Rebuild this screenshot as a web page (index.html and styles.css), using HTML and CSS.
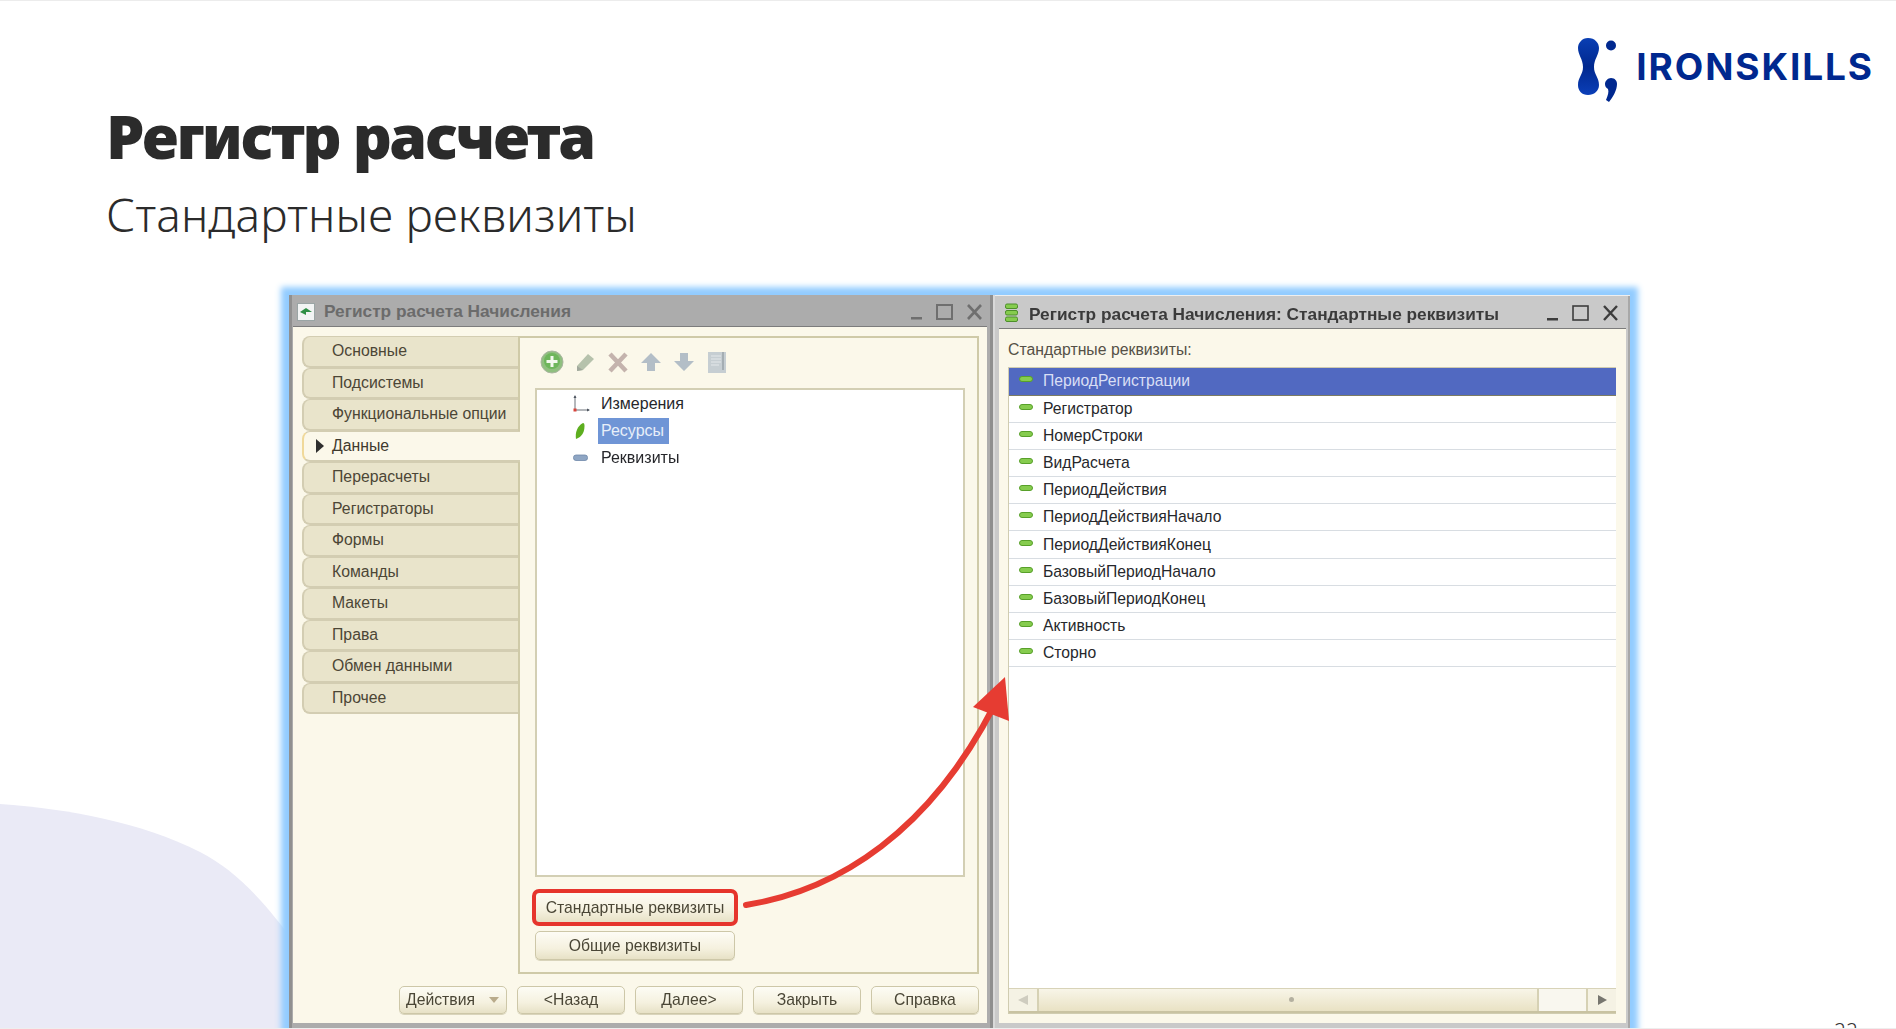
FILE: index.html
```html
<!DOCTYPE html>
<html lang="ru">
<head>
    <meta charset="UTF-8">
    <meta name="viewport" content="width=device-width, initial-scale=1.0">
    <title>Регистр расчета</title>
    <link rel="stylesheet" href="styles.css">
</head>
<body>
    <div class="slide">
        <svg class="blob" width="300" height="230" viewBox="0 0 300 230">
            <path d="M0 6 C70 11 140 24 200 54 C235 72 262 100 300 152 L300 230 L0 230 Z" fill="#eaeaf6"/>
        </svg>

        <header class="slide-head">
            <div class="titles">
                <h1>Регистр расчета</h1>
                <p class="subtitle">Стандартные реквизиты</p>
            </div>
            <div class="logo">
                <svg width="50" height="70" viewBox="0 0 50 70">
                    <defs>
                        <linearGradient id="logoFill" x1="0" y1="0" x2="0" y2="1">
                            <stop offset="0" stop-color="#0a3fb4"/>
                            <stop offset="0.5" stop-color="#00288f"/>
                            <stop offset="1" stop-color="#0b3fb8"/>
                        </linearGradient>
                    </defs>
                    <path d="M17 3 C24 3 28 8 28 13 C28 20 23 24 23 32 C23 40 28 42 28 50 C28 56 23 60 17 60 C11 60 7 56 7 50 C7 42 12 40 12 32 C12 24 7 20 7 13 C7 8 11 3 17 3 Z" fill="url(#logoFill)"/>
                    <circle cx="40" cy="10.5" r="5" fill="#00288f"/>
                    <path d="M40 43 C44 43 46 46 46 49 C46 55 42 62 38 67 L35 65 C37 60 38 57 37 54 C35 53 34 51 34 49 C34 46 37 43 40 43 Z" fill="#00288f"/>
                </svg>
                <span class="logo-text">IRONSKILLS</span>
            </div>
        </header>

        <div class="desktop">
            <!-- Окно регистра -->
            <section class="window window-main">
                <div class="titlebar">
                    <svg class="title-icon" width="18" height="18" viewBox="0 0 18 18">
                        <rect x="0.5" y="0.5" width="17" height="17" fill="#f2f4f4" stroke="#9aa5a5"/>
                        <path d="M3 9 L9 5 L15 9 L9 9 L9 12 Z" fill="#2f8f46"/>
                    </svg>
                    <span class="title-text">Регистр расчета Начисления</span>
                    <span class="win-controls">
                        <svg width="76" height="20" viewBox="0 0 76 20">
                            <rect x="1" y="15" width="11" height="2.5" fill="#6f6f6f"/>
                            <rect x="27" y="3" width="15" height="14" fill="none" stroke="#6f6f6f" stroke-width="2"/>
                            <path d="M58 3 L71 17 M71 3 L58 17" stroke="#6f6f6f" stroke-width="2.6"/>
                        </svg>
                    </span>
                </div>
                <div class="win-body">
                    <div class="editor">
                        <ul class="tabs">
                            <li>Основные</li>
                            <li>Подсистемы</li>
                            <li>Функциональные опции</li>
                            <li class="active">Данные</li>
                            <li>Перерасчеты</li>
                            <li>Регистраторы</li>
                            <li>Формы</li>
                            <li>Команды</li>
                            <li>Макеты</li>
                            <li>Права</li>
                            <li>Обмен данными</li>
                            <li>Прочее</li>
                        </ul>
                        <div class="panel">
                            <div class="toolbar">
                                <svg width="24" height="24" viewBox="0 0 24 24">
                                    <circle cx="12" cy="12" r="11" fill="#8fbf7f" stroke="#a9b5a0"/>
                                    <circle cx="12" cy="11" r="8" fill="#6eb65c"/>
                                    <path d="M12 6 V17 M6.5 11.5 H17.5" stroke="#f4f8ef" stroke-width="3"/>
                                </svg>
                                <svg width="24" height="24" viewBox="0 0 24 24">
                                    <path d="M4 16 L15 4 L21 9 L10 20 L4 21 Z" fill="#b6c2ac"/>
                                    <path d="M4 16 L10 20 L4 21 Z" fill="#a1a89c"/>
                                </svg>
                                <svg width="24" height="24" viewBox="0 0 24 24">
                                    <path d="M4 4 L20 21 M20 4 L4 21" stroke="#c4b3ad" stroke-width="4.5"/>
                                </svg>
                                <svg width="24" height="24" viewBox="0 0 24 24">
                                    <path d="M12 3 L22 13 H16 V21 H8 V13 H2 Z" fill="#b3bec7"/>
                                </svg>
                                <svg width="24" height="24" viewBox="0 0 24 24">
                                    <path d="M8 3 H16 V11 H22 L12 21 L2 11 H8 Z" fill="#b3bec7"/>
                                </svg>
                                <svg width="24" height="24" viewBox="0 0 24 24">
                                    <rect x="3" y="2" width="18" height="21" fill="#c6ced2"/>
                                    <path d="M6 6 H16 M6 9 H16 M6 12 H16 M6 15 H14" stroke="#e4e8e9" stroke-width="1.2"/>
                                    <path d="M18 2 V20" stroke="#a5aeb3" stroke-width="2"/>
                                </svg>
                            </div>
                            <div class="tree">
                                <div class="tree-row">
                                    <svg class="tree-icon" width="20" height="20" viewBox="0 0 20 20">
                                        <path d="M4 2 V16 H18" fill="none" stroke="#6a7078" stroke-width="1"/>
                                        <path d="M2.5 4 L4 1 L5.5 4 Z M16 14.5 L19 16 L16 17.5 Z" fill="#4e5560"/>
                                        <rect x="2.5" y="14.5" width="3" height="3" fill="#d8443c"/>
                                    </svg>
                                    <span class="tree-label">Измерения</span>
                                </div>
                                <div class="tree-row">
                                    <svg class="tree-icon" width="20" height="20" viewBox="0 0 20 20">
                                        <path d="M5 18 C4 12 6 5 12 2 C13 2 13.5 3 13.5 5 C13.5 11 11 16 5 18 Z" fill="#5dae1f"/>
                                    </svg>
                                    <span class="tree-label selected">Ресурсы</span>
                                </div>
                                <div class="tree-row">
                                    <svg class="tree-icon" width="20" height="20" viewBox="0 0 20 20">
                                        <rect x="2.5" y="7" width="14" height="5.5" rx="2.5" fill="#8fa6c4" stroke="#6f88aa" stroke-width="0.8"/>
                                    </svg>
                                    <span class="tree-label">Реквизиты</span>
                                </div>
                            </div>
                            <div class="panel-buttons">
                                <button class="btn btn-wide btn-marked">Стандартные реквизиты</button>
                                <button class="btn btn-wide">Общие реквизиты</button>
                            </div>
                        </div>
                    </div>
                    <div class="footer">
                        <button class="btn btn-foot btn-menu">Действия <span class="menu-caret"></span></button>
                        <button class="btn btn-foot">&lt;Назад</button>
                        <button class="btn btn-foot">Далее&gt;</button>
                        <button class="btn btn-foot">Закрыть</button>
                        <button class="btn btn-foot">Справка</button>
                    </div>
                </div>
            </section>

            <!-- Окно стандартных реквизитов -->
            <section class="window window-attrs">
                <div class="titlebar">
                    <svg class="title-icon" width="16" height="20" viewBox="0 0 16 20">
                        <rect x="1.5" y="1" width="12" height="4.5" rx="1.5" fill="#86cc4e" stroke="#4d8f2a"/>
                        <rect x="1.5" y="7.5" width="12" height="4.5" rx="1.5" fill="#86cc4e" stroke="#4d8f2a"/>
                        <rect x="1.5" y="14" width="12" height="4.5" rx="1.5" fill="#86cc4e" stroke="#4d8f2a"/>
                    </svg>
                    <span class="title-text">Регистр расчета Начисления: Стандартные реквизиты</span>
                    <span class="win-controls">
                        <svg width="76" height="20" viewBox="0 0 76 20">
                            <rect x="1" y="15" width="11" height="2.5" fill="#3d3d3d"/>
                            <rect x="27" y="3" width="15" height="14" fill="none" stroke="#3d3d3d" stroke-width="1.6"/>
                            <path d="M58 3 L71 17 M71 3 L58 17" stroke="#3d3d3d" stroke-width="2.4"/>
                        </svg>
                    </span>
                </div>
                <div class="win-body attrs-body">
                    <div class="attrs-label">Стандартные реквизиты:</div>
                    <div class="attrs-list">
                        <ul class="rows">
                            <li class="current"><i class="pill"></i>ПериодРегистрации</li>
                            <li><i class="pill"></i>Регистратор</li>
                            <li><i class="pill"></i>НомерСтроки</li>
                            <li><i class="pill"></i>ВидРасчета</li>
                            <li><i class="pill"></i>ПериодДействия</li>
                            <li><i class="pill"></i>ПериодДействияНачало</li>
                            <li><i class="pill"></i>ПериодДействияКонец</li>
                            <li><i class="pill"></i>БазовыйПериодНачало</li>
                            <li><i class="pill"></i>БазовыйПериодКонец</li>
                            <li><i class="pill"></i>Активность</li>
                            <li><i class="pill"></i>Сторно</li>
                        </ul>
                        <div class="scrollbar">
                            <div class="sb-btn"><span class="sb-left"></span></div>
                            <div class="sb-thumb"><i class="sb-grip"></i></div>
                            <div class="sb-track"></div>
                            <div class="sb-btn sb-btn-right"><span class="sb-right"></span></div>
                        </div>
                    </div>
                </div>
            </section>
        </div>

        <svg class="arrow" width="290" height="260" viewBox="730 670 290 260">
            <path d="M746 905 C840 890 930 830 994 706" fill="none" stroke="#e63c32" stroke-width="6" stroke-linecap="round"/>
            <path d="M1005 677 L1009 721 L973 707 Z" fill="#e63c32"/>
        </svg>

        <div class="page-num">22</div>
    </div>
</body>
</html>
```

FILE: styles.css
```css
* {
    box-sizing: border-box;
}
html, body {
    margin: 0;
    padding: 0;
    background: #fff;
}
body {
    width: 1896px;
    height: 1029px;
    overflow: hidden;
}
ul {
    list-style: none;
    margin: 0;
    padding: 0;
}
.slide {
    position: relative;
    width: 1896px;
    height: 1029px;
    overflow: hidden;
    background: #fff;
    border-top: 1px solid #ececec;
    border-bottom: 1px solid #eeeeee;
    font-family: "Liberation Sans", Arial, sans-serif;
}
.blob {
    position: absolute;
    left: 0;
    bottom: 0;
}
.slide-head {
    position: relative;
    display: flex;
    justify-content: space-between;
    padding: 0 22px 0 106px;
}
.titles {
    padding-top: 87px;
    color: #2b2b2b;
    font-family: "Noto Sans", sans-serif;
}
h1 {
    margin: 0;
    font-size: 61px;
    line-height: 95px;
    font-weight: 900;
    letter-spacing: -2.3px;
}
.subtitle {
    margin: 0;
    font-size: 46px;
    line-height: 62px;
    font-weight: 300;
    letter-spacing: 0.2px;
}
.logo {
    display: flex;
    align-items: flex-start;
    gap: 15px;
    padding-top: 34px;
}
.logo-text {
    margin-top: 7px;
    font-family: Inter, sans-serif;
    font-size: 37px;
    font-weight: 700;
    letter-spacing: 1.9px;
    line-height: 50px;
    color: #00288f;
}

/* окна */
.desktop {
    position: absolute;
    left: 289px;
    top: 294px;
    width: 1341px;
    height: 735px;
    display: flex;
    gap: 2px;
    background: #d9d9d9;
    box-shadow: 0 0 6px 8px #92ccff;
    filter: blur(0.5px);
}
.window {
    display: flex;
    flex-direction: column;
    height: 734px;
    background: #acacac;
}
.window-main {
    width: 704px;
    padding: 0 6px 6px 4px;
    background: #acacac;
    box-shadow: inset -3px 0 0 #8e8e8e, inset 3px 0 0 #909090;
}
.window-attrs {
    width: 635px;
    padding: 0 4px 6px 4px;
    background: #c9c9c9;
    box-shadow: inset 0 1px 0 #eeeeee, inset -2px 0 0 #a8a8a8;
}
.titlebar {
    flex: none;
    display: flex;
    align-items: center;
    height: 32px;
    gap: 9px;
    padding: 2px 1px 0 4px;
    font-size: 17.3px;
    font-weight: bold;
    white-space: nowrap;
}
.window-main .titlebar {
    color: #6b6b6b;
    border-bottom: 1px solid #7c7c7c;
}
.window-attrs .titlebar {
    height: 34px;
    color: #3b3b3b;
    border-bottom: 1px solid #7c7c7c;
    gap: 9px;
    padding: 3px 4px 0 5px;
}
.window-attrs .title-text {
    padding-top: 2px;
}
.win-controls {
    margin-left: auto;
    display: flex;
}
.win-body {
    flex: 1;
    min-height: 0;
    background: #fbf8ea;
    display: flex;
    flex-direction: column;
}
.editor {
    display: flex;
    height: 638px;
    margin: 9px 0 0 9px;
}
.tabs {
    flex: none;
    width: 216px;
    font-size: 15.8px;
    color: #4c4636;
}
.tabs li {
    height: 31.5px;
    line-height: 27px;
    padding-left: 28px;
    background: #e9e4cb;
    border: 2px solid #d3cdb2;
    border-right: none;
    border-top-left-radius: 8px;
    border-bottom-left-radius: 8px;
    border-top-width: 1px;
}
.tabs li.active {
    position: relative;
    background: #fbf8ea;
    border-left-color: #f0d99a;
    margin-right: -2px;
    z-index: 1;
    color: #3f3a2e;
}
.tabs li.active::before {
    content: "";
    position: absolute;
    left: 12px;
    top: 7px;
    border-left: 8px solid #2f2f2f;
    border-top: 7px solid transparent;
    border-bottom: 7px solid transparent;
}
.panel {
    flex: none;
    width: 461px;
    padding: 0 12px 12px 15px;
    border: 2px solid #cfcaa8;
    display: flex;
    flex-direction: column;
}
.toolbar {
    flex: none;
    display: flex;
    height: 50px;
    gap: 9px;
    padding: 12px 0 0 5px;
}
.tree {
    height: 490px;
    padding-top: 0;
    background: #fff;
    border: 2px solid #d3cfb4;
    font-size: 16px;
    color: #26272b;
}
.tree-row {
    display: flex;
    align-items: center;
    height: 27.4px;
    padding-left: 34px;
}
.tree-icon {
    margin-right: 7px;
}
.tree-label {
    padding: 0 5px 0 3px;
    height: 26px;
    line-height: 26px;
}
.tree-label.selected {
    background: #6f95d6;
    color: #e8eff9;
}
.panel-buttons {
    display: flex;
    flex-direction: column;
    gap: 8px;
    margin-top: 15px;
}
.btn {
    font-family: inherit;
    font-size: 15.75px;
    color: #4a4636;
    padding: 0;
    border: 1px solid #cdc7a8;
    border-radius: 5px;
    background: linear-gradient(#fdfcf5, #f5f1df 60%, #e7e1c6);
    box-shadow: 0 1px 0 #d9d4bb;
}
.btn-wide {
    width: 200px;
    height: 29px;
}
.btn-marked {
    height: 31px;
    outline: 4px solid #e6352d;
    outline-offset: -1px;
    border-radius: 4px;
}
.footer {
    display: flex;
    justify-content: flex-end;
    gap: 10px;
    padding: 12px 8px 0 0;
}
.btn-foot {
    width: 108px;
    height: 28px;
}
.btn-menu {
    display: flex;
    align-items: center;
    justify-content: space-between;
    padding: 0 7px 0 6px;
}
.menu-caret {
    border-top: 6px solid #b9ab8b;
    border-left: 5px solid transparent;
    border-right: 5px solid transparent;
}

/* список реквизитов */
.attrs-body {
    padding: 0 10px 9px 9px;
    border-top: none;
}
.attrs-label {
    height: 38px;
    line-height: 42px;
    font-size: 15.8px;
    color: #555046;
}
.attrs-list {
    flex: 1;
    display: flex;
    flex-direction: column;
    justify-content: space-between;
    background: #fff;
    border: 1px solid #d0ccb0;
    border-right: none;
}
.rows {
    font-size: 15.7px;
    color: #26272b;
}
.rows li {
    display: flex;
    align-items: center;
    height: 27.2px;
    padding-left: 10px;
    border-bottom: 1px solid #d8dde2;
}
.rows li.current {
    height: 27.5px;
    background: #5169c1;
    color: #d9dff5;
    border-bottom-color: #7c7c62;
}
.pill {
    flex: none;
    width: 14px;
    height: 6px;
    margin-right: 10px;
    margin-top: -4px;
    border-radius: 3px;
    background: #86cc4e;
    border: 1px solid #58a02a;
}
.scrollbar {
    flex: none;
    display: flex;
    height: 25px;
    border-top: 1px solid #d8d3b8;
    border-bottom: 2px solid #c9c3a2;
    background: #fff;
}
.sb-btn {
    flex: none;
    width: 30px;
    display: flex;
    align-items: center;
    justify-content: center;
    background: #f5f2e4;
    border-right: 2px solid #d6d1b4;
}
.sb-btn-right {
    border-right: none;
    border-left: 2px solid #d6d1b4;
}
.sb-left {
    border-right: 10px solid #cfccbf;
    border-top: 5px solid transparent;
    border-bottom: 5px solid transparent;
}
.sb-right {
    border-left: 9px solid #77766f;
    border-top: 5px solid transparent;
    border-bottom: 5px solid transparent;
}
.sb-thumb {
    flex: 1;
    position: relative;
    background: linear-gradient(#f8f5e8, #e9e2c4);
    border-right: 2px solid #d6d1b4;
}
.sb-grip {
    position: absolute;
    left: 250px;
    top: 8px;
    width: 5px;
    height: 5px;
    border-radius: 50%;
    background: #b4b0a0;
}
.sb-track {
    flex: none;
    width: 47px;
    background: #f9f7ef;
}

.arrow {
    position: absolute;
    left: 730px;
    top: 669px;
}
.page-num {
    position: absolute;
    left: 1834px;
    top: 1016px;
    font-family: "Noto Sans", sans-serif;
    font-size: 21px;
    font-weight: 300;
    line-height: 28px;
    color: #333;
}
```
